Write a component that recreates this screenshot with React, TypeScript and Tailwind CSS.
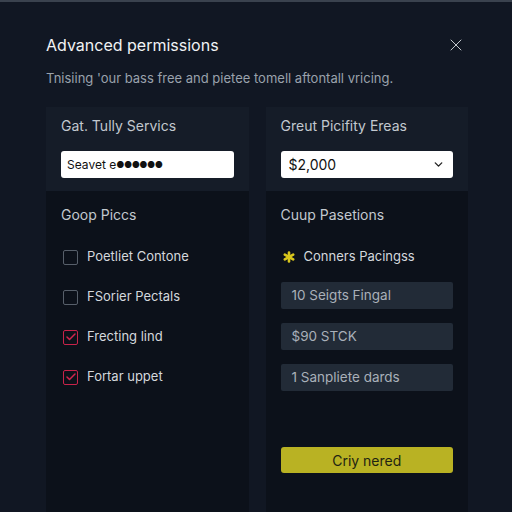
import { ChevronDown, X, Check } from "lucide-react";

const checks = [
  { label: "Poetliet Contone", on: false },
  { label: "FSorier Pectals", on: false },
  { label: "Frecting lind", on: true },
  { label: "Fortar uppet", on: true },
];

const fields = ["10 Seigts Fingal", "$90 STCK", "1 Sanpliete dards"];

function Spark() {
  return (
    <svg width="12" height="12" viewBox="0 0 12 12" className="shrink-0">
      <g stroke="#d9c61c" strokeWidth="2.6" strokeLinecap="round">
        <line x1="6" y1="1.5" x2="6" y2="10.5" />
        <line x1="1.8" y1="3.6" x2="10.2" y2="8.4" />
        <line x1="1.8" y1="8.4" x2="10.2" y2="3.6" />
      </g>
    </svg>
  );
}

export default function App() {
  return (
    <div
      className="flex h-[512px] w-[512px] flex-col overflow-hidden border-t-2 border-[#3a424e] bg-[#111723] pl-[46px] pr-[44px] pt-[33px]"
      style={{ fontFamily: "Inter, 'Noto Sans', sans-serif" }}
    >
      {/* header */}
      <div className="flex items-center justify-between pr-[2px]">
        <h1 className="text-[16px] leading-[20px] text-[#f1f3f5]">Advanced permissions</h1>
        <X size={20} strokeWidth={1.2} className="text-[#c3c8ce]" />
      </div>
      <p className="mt-[14px] text-[13px] leading-[18px] text-[#9aa2ac]">
        Tnisiing 'our bass free and pietee tomell aftontall vricing.
      </p>

      <div className="mt-[20px] grid flex-1 grid-cols-2 gap-[17px]">
        {/* left column */}
        <div className="flex flex-col">
          <div className="bg-[#151c28] px-[15px] pt-[9px] pb-[13px]">
            <div className="text-[14px] leading-[20px] text-[#c2c8cf]">Gat. Tully Servics</div>
            <div className="mt-[15px] flex h-[27px] items-center rounded-[3px] bg-white px-[6px] text-[12px] text-[#111]">
              Seavet e<span className="text-[9px] tracking-[-0.5px]">●●●●●●</span>
            </div>
          </div>
          <div className="flex-1 bg-[#0c111a] px-[15px] pt-[14px]">
            <div className="text-[14px] leading-[20px] text-[#c2c8cf]">Goop Piccs</div>
            <div className="mt-[22px] flex flex-col gap-[20px]">
              {checks.map((c) => (
                <div key={c.label} className="flex h-[20px] items-center gap-[9px] pl-[2px]">
                  <span
                    className={
                      c.on
                        ? "flex h-[15px] w-[15px] items-center justify-center rounded-[2px] border-[1.5px] border-[#c8234a]"
                        : "flex h-[15px] w-[15px] items-center justify-center rounded-[2px] border-[1.5px] border-[#575f6a]"
                    }
                  >
                    {c.on && <Check size={12} strokeWidth={3} className="text-[#d0264e]" />}
                  </span>
                  <span className="text-[13px] text-[#d4d8dd]">{c.label}</span>
                </div>
              ))}
            </div>
          </div>
        </div>

        {/* right column */}
        <div className="flex flex-col">
          <div className="bg-[#151c28] px-[15px] pt-[9px] pb-[13px]">
            <div className="text-[14px] leading-[20px] text-[#c2c8cf]">Greut Picifity Ereas</div>
            <div className="mt-[15px] flex h-[27px] items-center justify-between rounded-[3px] bg-white px-[8px] text-[14px] text-[#111]">
              $2,000
              <ChevronDown size={13} strokeWidth={2.5} className="text-[#222]" />
            </div>
          </div>
          <div className="flex flex-1 flex-col bg-[#0c111a] px-[15px] pt-[14px]">
            <div className="text-[14px] leading-[20px] text-[#c2c8cf]">Cuup Pasetions</div>
            <div className="mt-[22px] flex h-[20px] items-center gap-[9px] pl-[2px]">
              <Spark />
              <span className="text-[13px] text-[#d4d8dd]">Conners Pacingss</span>
            </div>
            <div className="mt-[15px] flex flex-col gap-[14px]">
              {fields.map((f) => (
                <div
                  key={f}
                  className="flex h-[27px] items-center rounded-[2px] bg-[#222b37] px-[11px] text-[13.5px] text-[#a9b0b9]"
                >
                  {f}
                </div>
              ))}
            </div>
            <button className="mt-[56px] h-[26px] rounded-[3px] bg-[#b9b223] text-[14px] text-[#1e2412]">
              Criy nered
            </button>
          </div>
        </div>
      </div>
    </div>
  );
}
